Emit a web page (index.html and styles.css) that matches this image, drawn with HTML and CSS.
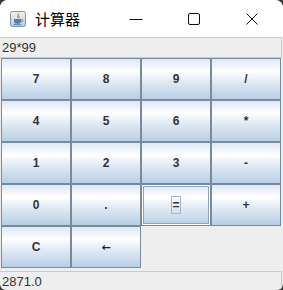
FILE: index.html
```html
<!DOCTYPE html>
<html lang="zh-CN">
<head>
  <meta charset="UTF-8" />
  <title>计算器</title>
  <link rel="stylesheet" href="styles.css">
</head>
<body>
  <div class="window">
    <div class="titlebar">
      <svg class="app-icon" width="16" height="16" viewBox="0 0 16 16">
        <defs>
          <linearGradient id="ig" x1="0" y1="0" x2="0" y2="1">
            <stop offset="0" stop-color="#eef3f8"/>
            <stop offset="1" stop-color="#b9cde0"/>
          </linearGradient>
        </defs>
        <rect x="0.5" y="0.5" width="15" height="15" rx="2" fill="url(#ig)" stroke="#7f93a8"/>
        <path d="M8 2.5c1.5 1.2-1 2.2 0 3.6 .6.8 1.4.4 1.2-.6" fill="none" stroke="#e07b1a" stroke-width="1.2"/>
        <path d="M4 8h7v2.4a2.4 2.4 0 0 1-2.4 2.4H6.4A2.4 2.4 0 0 1 4 10.4z" fill="#5a7fa6"/>
        <path d="M11 8.6h.8a1 1 0 0 1 0 2H11" fill="none" stroke="#5a7fa6" stroke-width="0.9"/>
        <path d="M3.5 13.6h8" stroke="#5a7fa6" stroke-width="0.9"/>
      </svg>
      <span class="title">计算器</span>
      <div class="controls">
        <span class="ctl">
          <svg width="14" height="14" viewBox="0 0 14 14"><path d="M0.5 7.5h13" stroke="#111" stroke-width="1"/></svg>
        </span>
        <span class="ctl">
          <svg width="14" height="14" viewBox="0 0 14 14"><rect x="1.5" y="1.5" width="11" height="11" rx="1.5" fill="none" stroke="#111" stroke-width="1"/></svg>
        </span>
        <span class="ctl">
          <svg width="14" height="14" viewBox="0 0 14 14"><path d="M1.5 1.5l11 11M12.5 1.5l-11 11" stroke="#111" stroke-width="1"/></svg>
        </span>
      </div>
    </div>

    <div class="display">29*99</div>

    <div class="keys">
      <button class="key">7</button>
      <button class="key">8</button>
      <button class="key">9</button>
      <button class="key">/</button>
      <button class="key">4</button>
      <button class="key">5</button>
      <button class="key">6</button>
      <button class="key">*</button>
      <button class="key">1</button>
      <button class="key">2</button>
      <button class="key">3</button>
      <button class="key">-</button>
      <button class="key">0</button>
      <button class="key">.</button>
      <button class="key focused"><span class="focus-ring">=</span></button>
      <button class="key">+</button>
      <button class="key">C</button>
      <button class="key back">←</button>
    </div>

    <div class="result">2871.0</div>
  </div>
</body>
</html>
```

FILE: styles.css
```css
* {
  box-sizing: border-box;
}
html, body {
  margin: 0;
  background: #3a3a3a;
}
.window {
  width: 283px;
  height: 290px;
  background: #eeeeee;
  border-radius: 8px 8px 6px 6px;
  overflow: hidden;
  display: flex;
  flex-direction: column;
  font-family: "Liberation Sans", Arial, sans-serif;
  color: #333333;
}

/* barra de titulo */
.titlebar {
  height: 37px;
  background: #ffffff;
  display: flex;
  align-items: center;
  flex-shrink: 0;
}
.app-icon {
  margin-left: 10px;
  margin-top: 1px;
}
.title {
  margin-left: 9px;
  font-family: "Noto Sans CJK SC", "Noto Sans", sans-serif;
  font-size: 15px;
  font-weight: 400;
  color: #000000;
}
.controls {
  margin-left: auto;
  margin-right: 2px;
  display: flex;
}
.ctl {
  width: 58px;
  height: 37px;
  display: flex;
  align-items: center;
  justify-content: center;
}

/* campos */
.display,
.result {
  font-size: 13px;
  color: #333333;
  padding-left: 2px;
  display: flex;
  align-items: center;
  flex-shrink: 0;
}
.display {
  height: 21px;
  width: 282px;
  border-top: 1px solid #b8cfe5;
  border-bottom: 1px solid #c4cdd6;
  border-right: 1px solid #b8cfe5;
}
.result {
  margin-top: 3px;
  height: 19px;
  width: 282px;
  border-top: 1px solid #b8cfe5;
  border-right: 1px solid #b8cfe5;
}

/* teclado */
.keys {
  display: grid;
  grid-template-columns: repeat(4, 70px);
  grid-auto-rows: 42px;
  margin-left: 1px;
  flex-shrink: 0;
}
.key {
  margin: 0;
  padding: 0;
  border: 1px solid #7a8a99;
  background: linear-gradient(#dde8f3 0%, #ffffff 30%, #dde8f3 60%, #b8cfe5 100%);
  font-family: "Liberation Sans", Arial, sans-serif;
  font-weight: 700;
  font-size: 12px;
  color: #333333;
  display: flex;
  align-items: center;
  justify-content: center;
}
.key.back {
  font-family: "DejaVu Sans", sans-serif;
  font-size: 11px;
  color: #222222;
}
.key.focused {
  box-shadow: inset 0 0 0 1px #ffffff, inset 0 0 0 2px #8fa3b8;
}
.focus-ring {
  display: inline-flex;
  align-items: center;
  justify-content: center;
  width: 10px;
  height: 18px;
  border: 1px solid #a3b8cc;
}
```
